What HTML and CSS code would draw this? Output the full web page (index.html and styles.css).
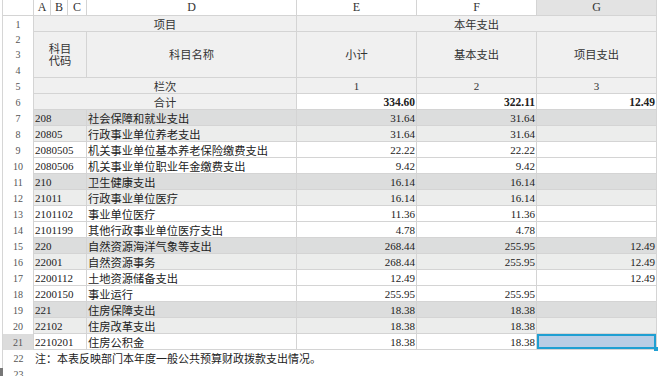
FILE: index.html
```html
<!DOCTYPE html>
<html>
<head>
	<meta charset="utf-8">
	<title>一般公共预算财政拨款支出表</title>
	<link rel="stylesheet" href="styles.css">
</head>
<body>
<div class="sheet">
	<div class="row colhead">
		<div class="corner"></div>
		<div class="ch">A</div>
		<div class="ch">B</div>
		<div class="ch">C</div>
		<div class="ch">D</div>
		<div class="ch">E</div>
		<div class="ch">F</div>
		<div class="ch cur">G</div>
	</div>

	<div class="row">
		<div class="rh">1</div>
		<div class="c hd span4">项目</div>
		<div class="c hd span3">本年支出</div>
	</div>
	<div class="row">
		<div class="rh">2</div>
		<div class="c hd span3 tall">科目<br>代码</div>
		<div class="c hd tall">科目名称</div>
		<div class="c hd tall">小计</div>
		<div class="c hd tall">基本支出</div>
		<div class="c hd tall">项目支出</div>
	</div>
	<div class="row"><div class="rh">3</div></div>
	<div class="row"><div class="rh">4</div></div>
	<div class="row">
		<div class="rh">5</div>
		<div class="c hd span4">栏次</div>
		<div class="c hd num-h">1</div>
		<div class="c hd num-h">2</div>
		<div class="c hd num-h">3</div>
	</div>
	<div class="row total">
		<div class="rh">6</div>
		<div class="c hd span4">合计</div>
		<div class="c n">334.60</div>
		<div class="c n">322.11</div>
		<div class="c n">12.49</div>
	</div>

	<div class="row lv1">
		<div class="rh">7</div><div class="c code span3">208</div><div class="c name">社会保障和就业支出</div>
		<div class="c n">31.64</div><div class="c n">31.64</div><div class="c n"></div>
	</div>
	<div class="row lv2">
		<div class="rh">8</div><div class="c code span3">20805</div><div class="c name">行政事业单位养老支出</div>
		<div class="c n">31.64</div><div class="c n">31.64</div><div class="c n"></div>
	</div>
	<div class="row">
		<div class="rh">9</div><div class="c code span3">2080505</div><div class="c name">机关事业单位基本养老保险缴费支出</div>
		<div class="c n">22.22</div><div class="c n">22.22</div><div class="c n"></div>
	</div>
	<div class="row">
		<div class="rh">10</div><div class="c code span3">2080506</div><div class="c name">机关事业单位职业年金缴费支出</div>
		<div class="c n">9.42</div><div class="c n">9.42</div><div class="c n"></div>
	</div>
	<div class="row lv1">
		<div class="rh">11</div><div class="c code span3">210</div><div class="c name">卫生健康支出</div>
		<div class="c n">16.14</div><div class="c n">16.14</div><div class="c n"></div>
	</div>
	<div class="row lv2">
		<div class="rh">12</div><div class="c code span3">21011</div><div class="c name">行政事业单位医疗</div>
		<div class="c n">16.14</div><div class="c n">16.14</div><div class="c n"></div>
	</div>
	<div class="row">
		<div class="rh">13</div><div class="c code span3">2101102</div><div class="c name">事业单位医疗</div>
		<div class="c n">11.36</div><div class="c n">11.36</div><div class="c n"></div>
	</div>
	<div class="row">
		<div class="rh">14</div><div class="c code span3">2101199</div><div class="c name">其他行政事业单位医疗支出</div>
		<div class="c n">4.78</div><div class="c n">4.78</div><div class="c n"></div>
	</div>
	<div class="row lv1">
		<div class="rh">15</div><div class="c code span3">220</div><div class="c name">自然资源海洋气象等支出</div>
		<div class="c n">268.44</div><div class="c n">255.95</div><div class="c n">12.49</div>
	</div>
	<div class="row lv2">
		<div class="rh">16</div><div class="c code span3">22001</div><div class="c name">自然资源事务</div>
		<div class="c n">268.44</div><div class="c n">255.95</div><div class="c n">12.49</div>
	</div>
	<div class="row">
		<div class="rh">17</div><div class="c code span3">2200112</div><div class="c name">土地资源储备支出</div>
		<div class="c n">12.49</div><div class="c n"></div><div class="c n">12.49</div>
	</div>
	<div class="row">
		<div class="rh">18</div><div class="c code span3">2200150</div><div class="c name">事业运行</div>
		<div class="c n">255.95</div><div class="c n">255.95</div><div class="c n"></div>
	</div>
	<div class="row lv1">
		<div class="rh">19</div><div class="c code span3">221</div><div class="c name">住房保障支出</div>
		<div class="c n">18.38</div><div class="c n">18.38</div><div class="c n"></div>
	</div>
	<div class="row lv2">
		<div class="rh">20</div><div class="c code span3">22102</div><div class="c name">住房改革支出</div>
		<div class="c n">18.38</div><div class="c n">18.38</div><div class="c n"></div>
	</div>
	<div class="row">
		<div class="rh cur">21</div><div class="c code span3">2210201</div><div class="c name">住房公积金</div>
		<div class="c n">18.38</div><div class="c n">18.38</div><div class="c n sel"></div>
	</div>

	<div class="row">
		<div class="rh plain">22</div>
		<div class="note span7">注：本表反映部门本年度一般公共预算财政拨款支出情况。</div>
	</div>
	<div class="row">
		<div class="rh plain">23</div>
		<div class="note span7"></div>
	</div>
</div>
<div class="scroll-mark"></div>
</body>
</html>
```

FILE: styles.css
```css
html, body{
	margin: 0;
	padding: 0;
	background: #fff;
	overflow: hidden;
}
body{
	height: 376px;
	font-family: "Liberation Serif", "Noto Sans CJK SC", serif;
	color: #222;
}
.sheet{
	display: grid;
	grid-template-columns: 31px 17px 17px 19px 210px 120px 120px 120px;
	grid-template-rows: 16px 16px 15px 15px 16px 16px 16px repeat(15, 16px) 16px 16px;
	margin-left: 2px;
	border-left: 1px solid #d6d6d6;
	width: max-content;
}
.row{
	display: contents;
}

/* column letters */
.corner, .ch{
	box-sizing: border-box;
	border-right: 1px solid #d4d4d4;
	border-bottom: 1px solid #d4d4d4;
	background: #fff;
}
.ch{
	display: flex;
	align-items: center;
	justify-content: center;
	font-size: 12px;
	color: #333;
}
.ch.cur{
	background: #e3e3e3;
}

/* row numbers */
.rh{
	box-sizing: border-box;
	border-right: 1px solid #d4d4d4;
	display: flex;
	align-items: center;
	justify-content: center;
	font-size: 10px;
	color: #555;
	background: #fff;
}
.rh.cur{
	background: #dcdcdc;
}
.rh.plain{
	border-right: none;
}

/* cells */
.c{
	box-sizing: border-box;
	border-right: 1px solid #d4d4d4;
	border-bottom: 1px solid #d4d4d4;
	display: flex;
	align-items: center;
	padding: 0 2px;
	font-size: 11px;
	white-space: nowrap;
	position: relative;
}
.hd{
	background: #f0f0f0;
	justify-content: center;
	text-align: center;
	font-size: 11.25px;
	color: #333;
}
.num-h{
	font-size: 11px;
}
.tall{
	grid-row: span 3;
	line-height: 12px;
}
.span3{
	grid-column: span 3;
}
.span4{
	grid-column: span 4;
}
.span7{
	grid-column: span 7;
}
.code{
	padding-left: 1px;
}
.name{
	font-size: 11.25px;
	padding-left: 1px;
}
.n{
	justify-content: flex-end;
	padding-right: 1px;
}
.total .n{
	font-weight: bold;
	font-size: 11.5px;
}
.lv1 .c{
	background: #dcdddd;
}
.lv2 .c{
	background: #ecedec;
}

/* current cell */
.c.sel{
	background: #b9cde5;
	box-shadow: inset 0 0 0 2px #1f9fd2;
}
.c.sel::after{
	content: "";
	position: absolute;
	right: -2px;
	bottom: -2px;
	width: 4px;
	height: 4px;
	background: #1f9fd2;
}

.note{
	display: flex;
	align-items: center;
	padding-left: 1px;
	font-size: 11px;
	white-space: nowrap;
	color: #222;
}

.scroll-mark{
	position: absolute;
	left: 0;
	bottom: 0;
	width: 3px;
	height: 8px;
	background: #777;
}
```
